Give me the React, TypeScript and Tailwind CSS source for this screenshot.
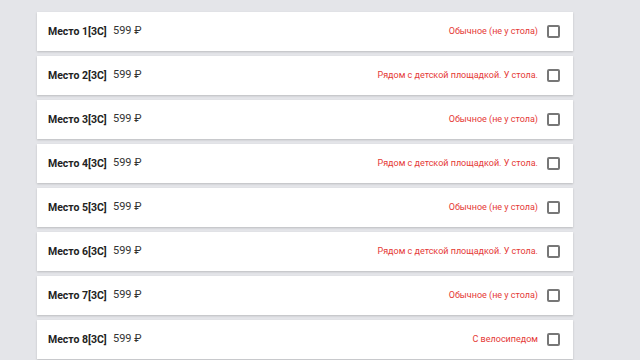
import React from 'react';

interface Seat {
  id: number;
  note: string;
}

const seats: Seat[] = [
  { id: 1, note: 'Обычное (не у стола)' },
  { id: 2, note: 'Рядом с детской площадкой. У стола.' },
  { id: 3, note: 'Обычное (не у стола)' },
  { id: 4, note: 'Рядом с детской площадкой. У стола.' },
  { id: 5, note: 'Обычное (не у стола)' },
  { id: 6, note: 'Рядом с детской площадкой. У стола.' },
  { id: 7, note: 'Обычное (не у стола)' },
  { id: 8, note: 'С велосипедом' },
];

const App: React.FC = () => {
  return (
    <div
      className="min-h-screen bg-[#e4e5e9] pt-3 pl-[37px] w-[640px] h-[360px] overflow-hidden"
      style={{ fontFamily: 'Roboto, "Noto Sans", sans-serif' }}
    >
      <div className="w-[536px] flex flex-col gap-[5px]">
        {seats.map((seat) => (
          <div
            key={seat.id}
            className="h-[39px] shrink-0 bg-white flex items-center pl-[11px] pr-[13px] shadow-[0_1px_2px_rgba(0,0,0,0.18)]"
          >
            <span className="text-[10.5px] font-bold text-[#222] w-[65px]">Место {seat.id}[3С]</span>
            <span className="text-[11px] text-[#333]">599 ₽</span>
            <span className="ml-auto text-[9px] text-[#e53935] mr-[9px]">{seat.note}</span>
            <div className="w-[13px] h-[13px] border-2 border-[#777] rounded-[2px]" />
          </div>
        ))}
      </div>
    </div>
  );
};

export default App;
